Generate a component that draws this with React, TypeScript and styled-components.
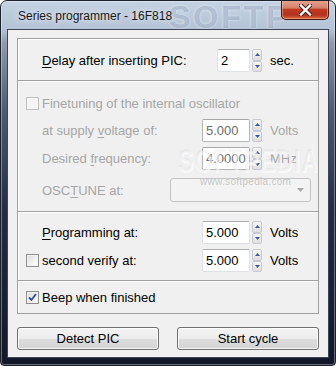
import styled, { createGlobalStyle } from "styled-components";

const GlobalStyle = createGlobalStyle`
  html, body {
    margin: 0;
    padding: 0;
    background: #ffffff;
  }
  body {
    font-family: "Liberation Sans", Arial, sans-serif;
    font-size: 13px;
  }
`;

const Window = styled.div`
  position: relative;
  box-sizing: border-box;
  width: 336px;
  height: 366px;
  padding: 0 6px 7px;
  display: flex;
  flex-direction: column;
  border: 1px solid #1c222c;
  border-radius: 7px 7px 4px 4px;
  overflow: hidden;
  background: linear-gradient(
    to bottom,
    #c4d2e2 0px,
    #b4c4d6 28px,
    #8e9aab 42px,
    #4e5a72 110px,
    #222c46 210px,
    #121829 100%
  );
  box-shadow: inset 0 0 0 1px rgba(255, 255, 255, 0.35);
`;

const TitleBar = styled.div`
  position: relative;
  height: 28px;
  display: flex;
  align-items: flex-start;
`;

const TitleText = styled.span`
  position: relative;
  z-index: 1;
  margin: 8px 0 0 11px;
  font-size: 12px;
  color: #1a1a1a;
  text-shadow: 0 0 6px rgba(255, 255, 255, 0.9);
`;

const TitleWatermark = styled.span`
  position: absolute;
  left: 162px;
  top: 0;
  font-size: 32px;
  line-height: 1;
  font-weight: bold;
  letter-spacing: 3px;
  color: rgba(70, 95, 140, 0.3);
  text-shadow: 0 0 3px rgba(255, 255, 255, 0.6);
  white-space: nowrap;
  pointer-events: none;
`;

const CloseButton = styled.div`
  position: relative;
  z-index: 2;
  margin: -1px 0 0 auto;
  width: 48px;
  height: 20px;
  box-sizing: border-box;
  border: 1px solid #47160e;
  border-top: none;
  border-radius: 0 0 5px 5px;
  display: flex;
  align-items: center;
  justify-content: center;
  background: linear-gradient(
    to bottom,
    #e6a696 0%,
    #d4806a 42%,
    #c13a20 50%,
    #b5321c 78%,
    #d7643e 100%
  );
  box-shadow: inset 0 0 0 1px rgba(255, 210, 190, 0.45);
`;

const Client = styled.div`
  position: relative;
  flex: 1;
  display: flex;
  flex-direction: column;
  padding: 8px 9px 0;
  border: 1px solid #3c4556;
  background: #f0f0f0;
`;

const Panel = styled.div<{ $pt: number; $pb: number }>`
  display: flex;
  flex-direction: column;
  padding: ${(p) => p.$pt}px 0 ${(p) => p.$pb}px;
  border: 1px solid #a0a0a0;
  box-shadow: inset 1px 1px 0 #ffffff;
  & + & {
    margin-top: -1px;
  }
`;

const Row = styled.div<{ $mt?: number; $h?: number }>`
  display: flex;
  align-items: center;
  height: ${(p) => p.$h ?? 23}px;
  padding-left: 8px;
  margin-top: ${(p) => p.$mt ?? 0}px;
`;

const LeadSlot = styled.span`
  width: 16px;
  display: flex;
  align-items: center;
`;

const Label = styled.span<{ $disabled?: boolean; $w?: number }>`
  width: ${(p) => (p.$w ? `${p.$w}px` : "auto")};
  color: ${(p) => (p.$disabled ? "#a6a6a6" : "#000000")};
  white-space: nowrap;
  line-height: 15px;
`;

const Key = styled.span`
  text-decoration: underline;
  text-underline-offset: 2px;
`;

const FieldSlot = styled.div`
  width: 48px;
  display: flex;
  justify-content: flex-end;
`;

const Input = styled.div<{ $w: number; $disabled?: boolean }>`
  box-sizing: border-box;
  width: ${(p) => p.$w}px;
  height: 23px;
  padding: 0 3px;
  display: flex;
  align-items: center;
  background: #ffffff;
  border: 1px solid ${(p) => (p.$disabled ? "#b4b4b4" : "#dde2e8")};
  border-top-color: ${(p) => (p.$disabled ? "#a8a8a8" : "#abadb3")};
  border-radius: 2px;
  color: ${(p) => (p.$disabled ? "#6d6d6d" : "#000000")};
  line-height: 15px;
`;

const Spinner = styled.div`
  margin-left: 2px;
  width: 10px;
  height: 23px;
  display: flex;
  flex-direction: column;
`;

const SpinHalf = styled.div`
  flex: 1;
  box-sizing: border-box;
  border: 1px solid #c4c9d2;
  border-radius: 2px;
  background: linear-gradient(to bottom, #f6f6f6, #dedede);
  display: flex;
  align-items: center;
  justify-content: center;
`;

const Unit = styled.span<{ $disabled?: boolean }>`
  margin-left: 8px;
  color: ${(p) => (p.$disabled ? "#a6a6a6" : "#000000")};
  line-height: 15px;
`;

const Box = styled.span<{ $disabled?: boolean }>`
  box-sizing: border-box;
  width: 13px;
  height: 13px;
  display: flex;
  align-items: center;
  justify-content: center;
  border: 1px solid ${(p) => (p.$disabled ? "#c0c0c0" : "#8e8f8f")};
  background: ${(p) =>
    p.$disabled
      ? "#f4f4f4"
      : "linear-gradient(135deg, #dadada 0%, #f4f4f4 60%, #ffffff 100%)"};
  box-shadow: inset 0 0 0 1px ${(p) => (p.$disabled ? "#f7f7f7" : "#f2f2f2")};
`;

const Combo = styled.div`
  box-sizing: border-box;
  width: 141px;
  height: 24px;
  margin-left: auto;
  margin-right: 7px;
  border: 1px solid #c3c3c3;
  border-radius: 3px;
  background: #f3f3f3;
  display: flex;
  align-items: center;
  justify-content: flex-end;
  padding-right: 6px;
`;

const ButtonBar = styled.div`
  display: flex;
  justify-content: space-between;
  margin-top: 13px;
`;

const PushButton = styled.button`
  box-sizing: border-box;
  width: 142px;
  height: 23px;
  padding: 0;
  border: 1px solid #707070;
  border-radius: 3px;
  font-family: "Liberation Sans", Arial, sans-serif;
  font-size: 13px;
  color: #000000;
  background: linear-gradient(
    to bottom,
    #f4f4f4 0%,
    #ececec 50%,
    #dedede 51%,
    #d2d2d2 100%
  );
  box-shadow: inset 0 0 0 1px rgba(255, 255, 255, 0.8);
`;

const BigWatermark = styled.span`
  position: absolute;
  left: 170px;
  top: 113px;
  font-size: 23px;
  font-weight: bold;
  letter-spacing: 1px;
  transform: scaleY(1.35);
  transform-origin: top left;
  color: rgba(0, 0, 0, 0.04);
  text-shadow: 1px 1px 0 rgba(255, 255, 255, 0.6);
  pointer-events: none;
  white-space: nowrap;
`;

const SiteWatermark = styled.span`
  position: absolute;
  left: 192px;
  top: 146px;
  font-size: 10px;
  letter-spacing: 0.3px;
  color: #c4c4c4;
  text-shadow: 0 0 1px #ffffff;
  pointer-events: none;
`;

const ArrowUp = () => (
  <svg width="5" height="3" viewBox="0 0 5 3">
    <path d="M2.5 0 L5 3 L0 3 Z" fill="#3d5a96" />
  </svg>
);

const ArrowDown = () => (
  <svg width="5" height="3" viewBox="0 0 5 3">
    <path d="M0 0 L5 0 L2.5 3 Z" fill="#3d5a96" />
  </svg>
);

const SpinButtons = () => (
  <Spinner>
    <SpinHalf>
      <ArrowUp />
    </SpinHalf>
    <SpinHalf>
      <ArrowDown />
    </SpinHalf>
  </Spinner>
);

const CheckBox = ({ checked, disabled }: { checked?: boolean; disabled?: boolean }) => (
  <Box $disabled={disabled}>
    {checked && (
      <svg width="9" height="9" viewBox="0 0 9 9">
        <path
          d="M1 4.5 L3.5 7 L8 1"
          fill="none"
          stroke="#2b4a9a"
          strokeWidth="1.8"
        />
      </svg>
    )}
  </Box>
);

const CloseGlyph = () => (
  <svg width="13" height="12" viewBox="0 0 13 12">
    <path
      d="M2 1.5 L11 10.5 M11 1.5 L2 10.5"
      stroke="#4a1c14"
      strokeWidth="4.2"
      strokeLinecap="square"
    />
    <path
      d="M2 1.5 L11 10.5 M11 1.5 L2 10.5"
      stroke="#ffffff"
      strokeWidth="2.4"
      strokeLinecap="square"
    />
  </svg>
);

type ValueRowProps = {
  label: React.ReactNode;
  value: string;
  unit: string;
  disabled?: boolean;
  check?: boolean;
  mt?: number;
};

const ValueRow = ({ label, value, unit, disabled, check, mt }: ValueRowProps) => (
  <Row $mt={mt}>
    <LeadSlot>{check && <CheckBox />}</LeadSlot>
    <Label $disabled={disabled} $w={160}>
      {label}
    </Label>
    <FieldSlot>
      <Input $w={48} $disabled={disabled}>
        {value}
      </Input>
    </FieldSlot>
    <SpinButtons />
    <Unit $disabled={disabled}>{unit}</Unit>
  </Row>
);

const App = () => {
  return (
    <>
      <GlobalStyle />
      <Window>
        <TitleBar>
          <TitleWatermark>SOFTP</TitleWatermark>
          <TitleText>Series programmer - 16F818</TitleText>
          <CloseButton>
            <CloseGlyph />
          </CloseButton>
        </TitleBar>

        <Client>
          <BigWatermark>SOFTPEDIA</BigWatermark>
          <SiteWatermark>www.softpedia.com</SiteWatermark>

          <Panel $pt={10} $pb={8}>
            <Row>
              <LeadSlot />
              <Label $w={160}>
                <Key>D</Key>elay after inserting PIC:
              </Label>
              <FieldSlot>
                <Input $w={33}>2</Input>
              </FieldSlot>
              <SpinButtons />
              <Unit>sec.</Unit>
            </Row>
          </Panel>

          <Panel $pt={16} $pb={9}>
            <Row $h={13}>
              <LeadSlot>
                <CheckBox disabled />
              </LeadSlot>
              <Label $disabled>Finetuning of the internal oscillator</Label>
            </Row>
            <ValueRow
              mt={9}
              disabled
              label={
                <>
                  at supply <Key>v</Key>oltage of:
                </>
              }
              value="5.000"
              unit="Volts"
            />
            <ValueRow
              mt={5}
              disabled
              label={
                <>
                  Desired <Key>f</Key>requency:
                </>
              }
              value="4.0000"
              unit="MHz"
            />
            <Row $mt={8} $h={24}>
              <LeadSlot />
              <Label $disabled>
                OSC<Key>T</Key>UNE at:
              </Label>
              <Combo>
                <svg width="7" height="4" viewBox="0 0 7 4">
                  <path d="M0 0 L7 0 L3.5 4 Z" fill="#a8a8a8" />
                </svg>
              </Combo>
            </Row>
          </Panel>

          <Panel $pt={9} $pb={8}>
            <ValueRow
              label={
                <>
                  <Key>P</Key>rogramming at:
                </>
              }
              value="5.000"
              unit="Volts"
            />
            <ValueRow mt={5} check label="second verify at:" value="5.000" unit="Volts" />
          </Panel>

          <Panel $pt={10} $pb={9}>
            <Row $h={13}>
              <LeadSlot>
                <CheckBox checked />
              </LeadSlot>
              <Label>Beep when finished</Label>
            </Row>
          </Panel>

          <ButtonBar>
            <PushButton>Detect PIC</PushButton>
            <PushButton>Start cycle</PushButton>
          </ButtonBar>
        </Client>
      </Window>
    </>
  );
};

export default App;
